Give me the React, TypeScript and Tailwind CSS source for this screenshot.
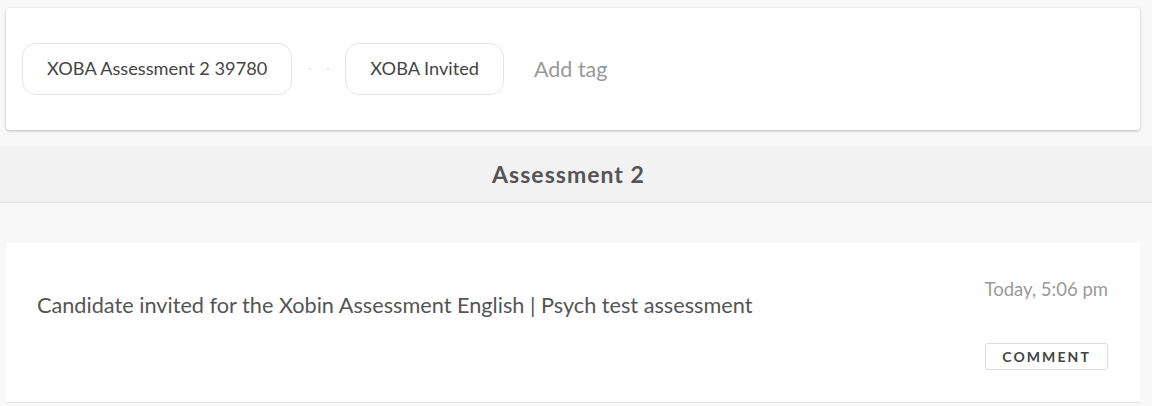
export default function App() {
  return (
    <main
      className="min-h-[406px] w-full bg-[#f8f8f8] pt-2"
      style={{ fontFamily: "Lato, 'Open Sans', sans-serif" }}
    >
      <section className="ml-[6px] mr-[12px] flex h-[122px] items-center rounded-[4px] bg-white pl-4 shadow-[0_1px_3px_rgba(0,0,0,0.25)]">
        <Tag label="XOBA Assessment 2 39780" />
        <span className="ml-[17px] mr-[16px] flex gap-[16px]">
          <span className="h-[2px] w-[2px] rounded-full bg-[#ddd]" />
          <span className="h-[2px] w-[2px] rounded-full bg-[#ddd]" />
        </span>
        <Tag label="XOBA Invited" />
        <span className="ml-[30px] text-[21.5px] text-[#999]">Add tag</span>
      </section>

      <div className="mt-4 flex h-[57px] items-center justify-center border-b border-[#e2e2e2] bg-[#f2f2f2] pr-[15px]">
        <h2 className="text-[23px] font-bold tracking-[0.045em] text-[#555]">Assessment 2</h2>
      </div>

      <article className="ml-[6px] mr-[12px] mt-10 flex h-[160px] justify-between border-b border-[#e4e4e4] bg-white pl-[31px] pr-[32px]">
        <p className="mt-[49px] text-[21.7px] leading-[26px] text-[#555]">
          Candidate invited for the Xobin Assessment English | Psych test assessment
        </p>
        <div className="flex flex-col items-end pt-[35px]">
          <span className="text-[18.5px] leading-[22px] text-[#999]">Today, 5:06 pm</span>
          <button className="mt-[43px] h-[27px] rounded-[3px] border border-[#ddd] bg-white px-[16px] text-[14px] font-bold leading-none tracking-[0.15em] text-[#444]">
            COMMENT
          </button>
        </div>
      </article>
    </main>
  );
}

function Tag({ label }: { label: string }) {
  return (
    <span className="flex h-[52px] items-center rounded-[14px] border border-[#e5e5e5] px-6 text-[18.2px] text-[#444]">
      {label}
    </span>
  );
}
